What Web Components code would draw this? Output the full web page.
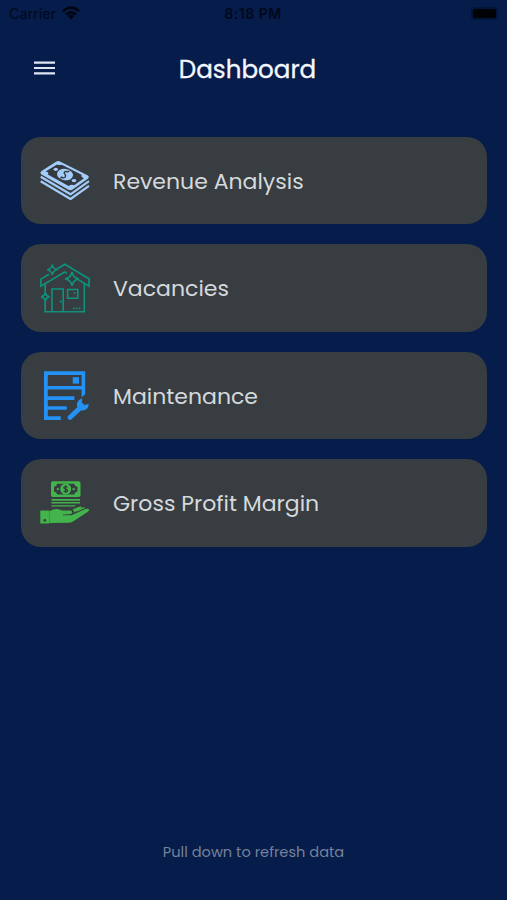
<!DOCTYPE html>
<html lang="en">
<head>
<meta charset="utf-8">
<title>Dashboard</title>
<style>
    body {
        margin: 0;
        background: #061c4a;
        font-family: Poppins, Inter, "Open Sans", sans-serif;
    }
</style>
</head>
<body>
<app-screen>
    <status-bar slot="status"></status-bar>
    <app-header slot="header">Dashboard</app-header>
    <menu-card icon="money">Revenue Analysis</menu-card>
    <menu-card icon="house">Vacancies</menu-card>
    <menu-card icon="service">Maintenance</menu-card>
    <menu-card icon="profit">Gross Profit Margin</menu-card>
    <span slot="footer">Pull down to refresh data</span>
</app-screen>

<script>
    const icons = {
        money: `
            <svg viewBox="0 0 50 50" fill="#a3ccfa">
                <path d="M16 5.7Q18 4.4 20.5 5.7L47.5 19.2Q50 20.8 47.8 22.7L33 33.2Q30.7 35 28 33.6L1.5 18.6Q-.7 16.8 1.6 15.1Z"/>
                <path fill="#343a40" d="M17 8.4Q19 9.6 21.8 8.8L41.6 18.8Q40.5 21 44 22.2L34.2 29.2Q31.5 27.8 28.6 30L7.8 18.4Q9.6 16.4 5.6 15.6Z"/>
                <ellipse cx="25" cy="18.6" rx="8" ry="5.7" transform="rotate(8 25 18.6)"/>
                <ellipse cx="15.8" cy="13.3" rx="2.2" ry="1.6"/>
                <ellipse cx="34" cy="24.6" rx="2.4" ry="1.7"/>
                <path fill="none" stroke="#343a40" stroke-width="1.4" d="M28 16.3c-2-1.6-4.7-.4-3.5 1.3s2.1 3.6-.7 4.2c-1.3.2-2.2-.3-2.9-.9M28.2 15.7l1.2-.8M21.6 21.3l-1.2.8"/>
                <path fill="none" stroke="#a3ccfa" stroke-width="2.2" stroke-linejoin="round" d="M.7 20.7L30.5 38.3 49 25.2M.7 25.2L30.5 43 49 29.8"/>
            </svg>`,
        house: `
            <svg viewBox="0 0 50 50" fill="none" stroke="#0c937d" stroke-width="1.6">
                <path d="M17 6L24.8 1.3 49 15.8V23L38.5 16.9M27 10.4L24.8 9 .9 23.2V16.1L9 11.2"/>
                <path d="M5.2 21V29.5M5.2 38V48.8H44.3V20.6"/>
                <path d="M12 48.8V26H23.2V48.8M27.6 26.5H37.8V35.2H27.6ZM20.7 37.5V39.7M33.6 30H35.6"/>
                <path d="M12.3 1.7Q13 6 17.3 6.8 13 7.6 12.3 11.9 11.6 7.6 7.3 6.8 11.6 6 12.3 1.7ZM32 9Q33 15 38.9 15.9 33 17 32 22.8 31 17 25.1 15.9 31 15 32 9ZM5.3 29.6Q6 33 9.5 33.7 6 34.5 5.3 38 4.6 34.5 1.1 33.7 4.6 33 5.3 29.6Z"/>
                <path stroke-dasharray="1.6 1.3" d="M33 45.4H41"/>
            </svg>`,
        service: `
            <svg viewBox="0 0 50 50" fill="#2492f5">
                <path fill-rule="evenodd" d="M4 .2H45.2V23.2L41.6 26.3V18.6H7.8V25.2H34.4V28.9H7.8V35.2H26.8V38.8H7.8V45.2H20.8V48.9H4ZM7.8 4V15H41.6V4Z"/>
                <path d="M32.7 6.2H39V12.6H32.7Z"/>
                <path d="M28 44.9L37.4 36Q35.4 31 40.8 27.7L42.2 27.4 41.8 31.6 44.4 34 48.8 32.9Q48.6 39.4 40.9 39.5L31 48.7Q28.8 49.4 27.8 47.5 27.2 46 28 44.9Z"/>
            </svg>`,
        profit: `
            <svg viewBox="0 0 50 50" fill="#43b44b">
                <path fill-rule="evenodd" d="M12.8 3.2H38.6Q40.5 3.2 40.5 5.1V17Q40.5 18.9 38.6 18.9H12.8Q11 18.9 11 17V5.1Q11 3.2 12.8 3.2ZM17.2 5.7Q16.8 8.3 14 8.7V13.4Q16.8 13.8 17.2 16.4H34.2Q34.6 13.8 37.4 13.4V8.7Q34.6 8.3 34.2 5.7Z"/>
                <circle cx="25.7" cy="11.1" r="5.5"/>
                <circle cx="17.8" cy="11.1" r="1.2"/>
                <circle cx="33.6" cy="11.1" r="1.2"/>
                <path fill="none" stroke="#343a40" stroke-width="1.2" d="M27.5 9.3c-1-1.2-3.6-1-3.6.5 0 1.8 3.8.9 3.8 2.8 0 1.5-2.8 1.7-4 .3M25.7 7.2V15"/>
                <path d="M11.5 21H40V22.7H11.5ZM11.5 24.1H40V25.5H11.5ZM11.5 27.2H36L34.5 28.6H11.5Z"/>
                <path fill-rule="evenodd" d="M.3 32.4H9.4V45.4H.3ZM4.8 41A1.4 1.4 0 1 0 4.8 43.8 1.4 1.4 0 1 0 4.8 41Z"/>
                <path d="M9.4 33.2Q15.5 30 20 31.7L22 32.4H30Q32.4 32.6 32.3 34.4 32 36 29.5 36.2L23 36.5V37.3H31.5L46 30.8Q48.6 30.2 49.2 31.8 49 33.3 47.5 34L33.8 43.1Q31.8 44.6 29 44.8L9.4 45.1ZM32.5 31.6L39 28.7Q41.5 28.2 42 29.7L34 34.8Q34.5 33 32.5 31.6Z"/>
                <path fill="none" stroke="#43b44b" stroke-width="1.3" d="M37 32.8L44.5 29.6"/>
            </svg>`
    };

    class AppScreen extends HTMLElement {
        constructor() {
            super();
            this.attachShadow({ mode: 'open' });
            this.shadowRoot.innerHTML = `
                <style>
                    :host {
                        display: flex;
                        flex-direction: column;
                        box-sizing: border-box;
                        height: 900px;
                        overflow: hidden;
                    }
                    main {
                        flex: 1;
                        display: flex;
                        flex-direction: column;
                        gap: 20px;
                        padding: 26.8px 20px 0 21px;
                    }
                    footer {
                        height: 59px;
                        text-align: center;
                        font-size: 14.6px;
                        line-height: 22px;
                        color: #74829b;
                    }
                </style>
                <slot name="status"></slot>
                <slot name="header"></slot>
                <main><slot></slot></main>
                <footer><slot name="footer"></slot></footer>
            `;
        }
    }

    class StatusBar extends HTMLElement {
        constructor() {
            super();
            this.attachShadow({ mode: 'open' });
            this.shadowRoot.innerHTML = `
                <style>
                    :host {
                        display: grid;
                        grid-template-columns: 1fr auto 1fr;
                        align-items: center;
                        height: 28px;
                        padding: 0 10px 0 9px;
                        font-family: Inter, sans-serif;
                        font-size: 14.3px;
                        color: #01081c;
                    }
                    .carrier {
                        display: flex;
                        align-items: center;
                        gap: 6px;
                        margin-top: -1px;
                    }
                    .time {
                        margin-top: -1px;
                        font-weight: 600;
                        font-size: 14px;
                        letter-spacing: 0.5px;
                    }
                    .wifi {
                        width: 18px;
                        height: 14px;
                        margin-top: -1px;
                    }
                    .battery {
                        justify-self: end;
                        width: 23px;
                        height: 9px;
                        margin: -2px 1px 0 0;
                        border-radius: 2px;
                        background: #000206;
                        box-shadow: 0 0 0 2px #03143a;
                    }
                </style>
                <div class="carrier">
                    <span>Carrier</span>
                    <svg class="wifi" viewBox="0 0 18 14" fill="none" stroke="#000510" stroke-width="2.6">
                        <path d="M1 5.2Q9-1.8 17 5.2M4 8.6Q9 4.3 14 8.6"/>
                        <path fill="#000510" stroke="none" d="M5.8 10.1Q9 7.6 12.2 10.1L9 13.6Z"/>
                    </svg>
                </div>
                <div class="time">8:18 PM</div>
                <div class="battery"></div>
            `;
        }
    }

    class AppHeader extends HTMLElement {
        constructor() {
            super();
            this.attachShadow({ mode: 'open' });
            this.shadowRoot.innerHTML = `
                <style>
                    :host {
                        display: grid;
                        grid-template-columns: 56px 1fr 56px;
                        align-items: center;
                        height: 82px;
                    }
                    svg {
                        display: block;
                        width: 22px;
                        height: 14px;
                        margin: -2px 0 0 34px;
                    }
                    h1 {
                        margin: 0 12px 0 0;
                        padding-top: 1px;
                        text-align: center;
                        font-size: 24.6px;
                        line-height: 36px;
                        font-weight: 400;
                        -webkit-text-stroke: 0.3px #f5f8ff;
                        color: #f5f8ff;
                    }
                </style>
                <svg viewBox="0 0 22 14" stroke="#dfe5f3" stroke-width="2.2">
                    <path d="M0 1.6H21M0 7H21M0 12.4H21"/>
                </svg>
                <h1><slot></slot></h1>
            `;
        }
    }

    class MenuCard extends HTMLElement {
        constructor() {
            super();
            this.attachShadow({ mode: 'open' });
        }

        connectedCallback() {
            this.shadowRoot.innerHTML = `
                <style>
                    :host {
                        display: flex;
                        align-items: center;
                        gap: 23px;
                        box-sizing: border-box;
                        height: 87.5px;
                        padding-left: 19px;
                        border-radius: 20px;
                        background: #383d41;
                    }
                    svg {
                        display: block;
                        width: 50px;
                        height: 50px;
                    }
                    .label {
                        padding-top: 2.4px;
                        font-size: 22px;
                        line-height: 32px;
                        white-space: nowrap;
                        color: #d5d9dc;
                    }
                </style>
                ${icons[this.getAttribute('icon')]}
                <span class="label"><slot></slot></span>
            `;
        }
    }

    customElements.define('app-screen', AppScreen);
    customElements.define('status-bar', StatusBar);
    customElements.define('app-header', AppHeader);
    customElements.define('menu-card', MenuCard);
</script>
</body>
</html>
